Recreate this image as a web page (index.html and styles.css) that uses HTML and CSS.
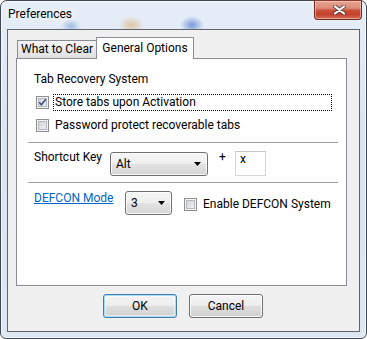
FILE: index.html
```html
<!DOCTYPE html>
<html>
<head>
<meta charset="utf-8">
<link rel="stylesheet" href="styles.css">
</head>
<body>
<div class="window">
  <div class="titlebar">
    <span class="title">Preferences</span>
    <button class="close" aria-label="Close">
      <svg width="13" height="10" viewBox="0 0 13 10">
        <path d="M2 1.5 L11 8.5 M11 1.5 L2 8.5" stroke="#3b3b3b" stroke-width="4" stroke-linecap="round" opacity="0.75"/>
        <path d="M2 1.5 L11 8.5 M11 1.5 L2 8.5" stroke="#ffffff" stroke-width="2.2" stroke-linecap="round"/>
      </svg>
    </button>
  </div>
  <div class="client">
    <div class="tabs">
      <div class="tab">What to Clear</div>
      <div class="tab active">General Options</div>
    </div>
    <div class="panel">
      <div class="heading">Tab Recovery System</div>
      <label class="check first">
        <span class="box"><svg width="9" height="9" viewBox="0 0 9 9"><path d="M1.2 4.3 L3.4 6.8 L7.8 1.2" fill="none" stroke="#3d5288" stroke-width="1.6"/></svg></span>
        <span class="text focus">Store tabs upon Activation</span>
      </label>
      <label class="check second">
        <span class="box"></span>
        <span class="text">Password protect recoverable tabs</span>
      </label>
      <hr class="sep sep1">
      <div class="row shortcut">
        <span class="lbl">Shortcut Key</span>
        <div class="combo wide"><span>Alt</span><svg class="arrow" width="7" height="4" viewBox="0 0 7 4"><path d="M0 0 H7 L3.5 4 Z" fill="#000"/></svg></div>
        <span class="plus">+</span>
        <div class="textbox">x</div>
      </div>
      <hr class="sep sep2">
      <div class="row defcon">
        <span class="lbl link-wrap"><a class="link" href="#">DEFCON Mode</a></span>
        <div class="combo narrow"><span>3</span><svg class="arrow" width="7" height="4" viewBox="0 0 7 4"><path d="M0 0 H7 L3.5 4 Z" fill="#000"/></svg></div>
        <label class="check third">
          <span class="box"></span>
          <span class="text">Enable DEFCON System</span>
        </label>
      </div>
    </div>
    <div class="buttons">
      <button class="btn default">OK</button>
      <button class="btn">Cancel</button>
    </div>
  </div>
</div>
</body>
</html>
```
FILE: styles.css
```css
* { box-sizing: border-box; }
html, body { margin: 0; padding: 0; }
body {
  width: 367px;
  height: 339px;
  overflow: hidden;
  background: #ffffff;
  font-family: "Roboto", "Noto Sans", sans-serif;
  font-size: 12px;
  color: #000;
}

.window {
  width: 367px;
  height: 339px;
  border: 1px solid #3e4753;
  border-radius: 7px 7px 6px 6px;
  padding: 0 6px 6px;
  display: flex;
  flex-direction: column;
  background:
    radial-gradient(ellipse 13px 9px at 130px 24px, rgba(222, 165, 100, 0.55), rgba(222, 165, 100, 0)),
    radial-gradient(ellipse 12px 9px at 191px 24px, rgba(70, 118, 205, 0.7), rgba(70, 118, 205, 0)),
    radial-gradient(ellipse 10px 7px at 70px 25px, rgba(80, 128, 205, 0.45), rgba(80, 128, 205, 0)),
    linear-gradient(#e6eef8, #d9e4f1 40%, #dde7f3);
  box-shadow: inset 0 0 0 1px rgba(255, 255, 255, 0.7);
}

.titlebar {
  height: 28px;
  flex: none;
  display: flex;
  align-items: flex-start;
}
.title {
  padding: 6px 0 0 1px;
  line-height: 15px;
  text-shadow: 0 0 6px #fff, 0 0 10px rgba(255, 255, 255, 0.9);
}
.close {
  margin: -1px -2px 0 auto;
  width: 48px;
  height: 20px;
  padding: 0;
  border: 1px solid #6e2a20;
  border-top-color: #8a3a2e;
  border-radius: 0 0 4px 4px;
  background: linear-gradient(#e7a593 0%, #dc8a76 40%, #c9503c 52%, #c3402d 75%, #d2705a 100%);
  box-shadow: inset 0 0 0 1px rgba(255, 215, 200, 0.55);
  display: flex;
  align-items: center;
  justify-content: center;
}
.close svg { display: block; margin-left: 3px; }

.client {
  flex: 1;
  border: 1px solid #5d646e;
  background: #f0f0f0;
  padding: 7px 12px 0 8px;
  display: flex;
  flex-direction: column;
}

.tabs {
  height: 21px;
  display: flex;
  align-items: flex-end;
  padding-left: 1px;
  position: relative;
  z-index: 1;
}
.tab {
  width: 80px;
  height: 18px;
  border: 1px solid #898c95;
  border-bottom: 0;
  background: linear-gradient(#f4f4f4, #ebebeb 50%, #dfdfdf);
  text-align: center;
  line-height: 15px;
  padding-top: 1px;
  white-space: nowrap;
}
.tab.active {
  width: 98px;
  height: 22px;
  margin-left: -1px;
  margin-bottom: -1px;
  background: #ffffff;
  padding-top: 3px;
}

.panel {
  height: 228px;
  flex: none;
  border: 1px solid #898c95;
  background: #ffffff;
  display: flex;
  flex-direction: column;
}

.heading {
  margin: 13px 0 0 17px;
  line-height: 15px;
}

.check {
  display: flex;
  align-items: center;
  line-height: 15px;
}
.check.first { margin: 7px 0 0 19px; height: 17px; }
.check.second { margin: 6px 0 0 19px; height: 17px; }
.check.third { margin: 5px 0 0 12px; }

.box {
  width: 13px;
  height: 13px;
  flex: none;
  border: 1px solid #8e8f8f;
  background: linear-gradient(135deg, #caced4, #f7f7f7);
  box-shadow: inset 0 0 0 1px #f4f4f4, inset 0 0 0 2px #b4b8bf;
  margin-right: 4px;
  display: flex;
  align-items: center;
  justify-content: center;
}
.box svg { display: block; }
.text {
  border: 1px solid transparent;
  padding-left: 1px;
  white-space: nowrap;
}
.text.focus {
  width: 279px;
  border: 1px dotted #000;
}

.sep {
  border: 0;
  height: 1px;
  background: #a0a0a0;
  margin: 8px 8px 0 11px;
}
.sep2 { margin-top: 6px; }

.row {
  display: flex;
  align-items: flex-start;
  margin-left: 17px;
  line-height: 15px;
}
.row.shortcut { margin-top: 7px; }
.row.defcon { margin-top: 8px; }
.lbl { width: 76px; white-space: nowrap; }
.link-wrap { width: 91px; }
.link { color: #0066cc; text-decoration: underline; }

.combo {
  height: 24px;
  border: 1px solid #707070;
  border-radius: 3px;
  background: linear-gradient(#f6f6f6 0%, #eeeeee 50%, #e2e2e2 51%, #d6d6d6 100%);
  box-shadow: inset 0 0 0 1px rgba(255, 255, 255, 0.8);
  display: flex;
  align-items: center;
  justify-content: space-between;
  padding: 0 6px 0 5px;
}
.combo .arrow { display: block; }
.combo.wide { width: 98px; margin-top: 2px; }
.combo.narrow { width: 47px; }

.plus {
  width: 27px;
  padding-left: 11px;
}
.textbox {
  width: 31px;
  height: 25px;
  margin-top: 1px;
  border: 1px solid #d3d6dc;
  border-top-color: #c3c7ce;
  background: #fff;
  padding-left: 4px;
  line-height: 15px;
}

.buttons {
  display: flex;
  justify-content: center;
  gap: 12px;
  margin-top: 8px;
  padding-left: 3px;
}
.btn {
  width: 74px;
  height: 24px;
  font-family: inherit;
  font-size: 12px;
  color: #000;
  border: 1px solid #707070;
  border-radius: 3px;
  background: linear-gradient(#f4f4f4 0%, #ececec 50%, #dedede 51%, #d0d0d0 100%);
  box-shadow: inset 0 0 0 1px rgba(255, 255, 255, 0.8);
  padding: 0;
  line-height: 15px;
}
.btn.default {
  border-color: #3c7fb1;
  box-shadow: inset 0 0 0 1px #a9dbf6, inset 0 0 0 2px rgba(255, 255, 255, 0.5);
}
```
